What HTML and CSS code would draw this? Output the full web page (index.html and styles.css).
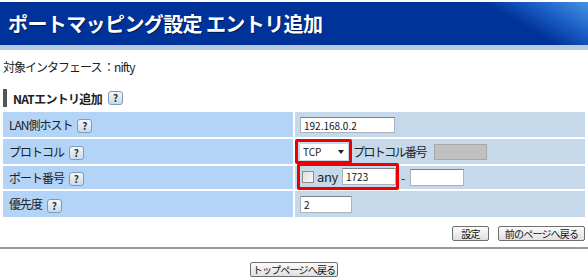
FILE: index.html
```html
<!DOCTYPE html>
<html lang="ja">
<head>
  <meta charset="UTF-8">
  <title>ポートマッピング設定 エントリ追加</title>
  <link rel="stylesheet" href="styles.css">
</head>
<body>

  <!-- Page title bar -->
  <div class="titleBar">
    <h1>ポートマッピング設定 エントリ追加</h1>
  </div>

  <div class="content">
    <p class="target">対象インタフェース ：nifty</p>

    <!-- NAT entry section -->
    <div class="sectionHead">
      <span class="sectionName">NATエントリ追加</span>
      <span class="help">?</span>
    </div>

    <table class="formTable">
      <tr class="row1">
        <th>LAN側ホスト <span class="help">?</span></th>
        <td><input type="text" class="hostInput" value="192.168.0.2"></td>
      </tr>
      <tr class="row2">
        <th>プロトコル <span class="help">?</span></th>
        <td>
          <div class="inline">
            <span class="redBox protoBox">
              <span class="select">TCP <span class="arrow"></span></span>
            </span>
            <span class="protoLabel">プロトコル番号</span>
            <input type="text" class="protoNum" disabled>
          </div>
        </td>
      </tr>
      <tr class="row3">
        <th>ポート番号 <span class="help">?</span></th>
        <td>
          <div class="inline">
            <span class="redBox portBox">
              <span class="check"></span>
              <span class="anyLabel">any</span>
              <input type="text" class="portInput" value="1723">
            </span>
            <span class="dash">-</span>
            <input type="text" class="portInput portEnd">
          </div>
        </td>
      </tr>
      <tr class="row4">
        <th>優先度 <span class="help">?</span></th>
        <td><input type="text" class="prioInput" value="2"></td>
      </tr>
    </table>

    <div class="actions">
      <button class="btn btnSet">設定</button>
      <button class="btn btnBack">前のページへ戻る</button>
    </div>
  </div>

  <hr class="rule">

  <div class="footer">
    <button class="btn btnTop">トップページへ戻る</button>
  </div>

</body>
</html>
```

FILE: styles.css
```css
/* Base */
body {
  margin: 0;
  font-family: "Noto Sans CJK JP", "Noto Sans", sans-serif;
  font-size: 12px;
  color: #222;
  background: #fff;
  overflow: hidden;
}

/* Title bar */
.titleBar {
  margin-top: 2px;
  height: 43px;
  background: linear-gradient(30deg, #003399 84%, #1a5cc4 91%, #4494e4 100%);
  border-bottom: 5px solid #b6cbde;
  display: flex;
  align-items: center;
}

h1 {
  margin: 0 0 0 8px;
  font-size: 20px;
  font-weight: 700;
  color: #fff;
  letter-spacing: -0.6px;
  text-shadow: 1px 1px 0 #001a55;
}

.content {
  padding: 0 1px;
}

.target {
  margin: 10px 0 0 2px;
  line-height: 14px;
  font-size: 12px;
  letter-spacing: -1px;
}

/* Section heading with side bar */
.sectionHead {
  margin: 15px 0 0 2px;
  height: 18px;
  border-left: 4px solid #555;
  padding-left: 6px;
  display: flex;
  align-items: center;
  gap: 6px;
}

.sectionName {
  font-weight: 700;
  letter-spacing: -0.7px;
}

/* Help "?" badge */
.help {
  display: inline-flex;
  align-items: center;
  justify-content: center;
  width: 13px;
  height: 12px;
  border: 1px solid #7f9bbb;
  border-radius: 3px;
  background: linear-gradient(#f5f8fc, #c9d9ea);
  font-size: 10px;
  font-weight: 700;
  color: #333;
  vertical-align: middle;
  line-height: 1;
  letter-spacing: 0;
}

/* Form table */
.formTable {
  width: 586px;
  margin-top: 3px;
  border-spacing: 2px;
}

.formTable th {
  width: 284px;
  padding: 0 0 0 6px;
  text-align: left;
  font-weight: 400;
  background: #b3d3f7;
  letter-spacing: -1px;
}

.formTable th .help {
  margin-left: 3px;
}

.formTable td {
  padding: 0 0 0 5px;
  background: #c6d9ea;
}

.row1 { height: 25px; }
.row2 { height: 25px; }
.row3 { height: 23px; }
.row4 { height: 26px; }

input[type="text"] {
  box-sizing: border-box;
  height: 16px;
  margin: 0;
  padding: 0 3px;
  border: 1px solid #aab4be;
  border-top-color: #7a838c;
  background: #fff;
  font-family: "Noto Sans CJK JP", sans-serif;
  font-size: 10px;
  color: #111;
  outline: none;
}

.hostInput {
  width: 95px;
}

.inline {
  display: flex;
  align-items: center;
}

/* Red highlight boxes */
.redBox {
  border: 3px solid #ee0000;
  border-radius: 2px;
  display: inline-flex;
  align-items: center;
  box-sizing: border-box;
}

.protoBox {
  margin: -1px 0 -1px -5px;
  width: 57px;
  height: 25px;
  padding-left: 2px;
}

.select {
  box-sizing: border-box;
  width: 48px;
  height: 16px;
  background: #fff;
  display: flex;
  align-items: center;
  justify-content: space-between;
  padding: 0 4px 0 3px;
  font-size: 10px;
}

.arrow {
  width: 0;
  height: 0;
  border-left: 3px solid transparent;
  border-right: 3px solid transparent;
  border-top: 4px solid #222;
}

.protoLabel {
  margin-left: 1px;
  letter-spacing: -1.6px;
}

.protoNum {
  width: 53px;
  margin-left: 8px !important;
  background: #c0c0c0 !important;
  border-color: #a8a8a8 !important;
}

.portBox {
  margin: -3px 0 -1px -3px;
  width: 102px;
  height: 27px;
  padding-left: 2px;
}

.check {
  box-sizing: border-box;
  width: 12px;
  height: 12px;
  border: 1px solid #8d8d8d;
  background: linear-gradient(135deg, #dcdcdc, #fbfbfb);
}

.anyLabel {
  margin: 0 4px 0 3px;
  font-size: 13px;
  letter-spacing: -0.3px;
}

.portInput {
  width: 54px;
  height: 17px !important;
}

.dash {
  margin: 0 5px 0 2px;
}

.prioInput {
  width: 52px;
  height: 17px !important;
}

/* Buttons */
.btn {
  box-sizing: border-box;
  height: 15px;
  padding: 0;
  border: 1px solid #6f6f6f;
  border-radius: 2px;
  background: linear-gradient(#fbfbfb, #e0e0e0);
  font-family: "Noto Sans CJK JP", sans-serif;
  font-size: 10px;
  line-height: 12px;
  color: #111;
  letter-spacing: -0.8px;
  white-space: nowrap;
  text-align: center;
}

.actions {
  margin-top: 7px;
  padding-right: 2px;
  display: flex;
  justify-content: flex-end;
  gap: 9px;
}

.btnSet {
  width: 37px;
}

.btnBack {
  width: 87px;
}

.rule {
  margin: 6px 0 0;
  height: 2px;
  border: none;
  background: #9a9a9a;
}

.footer {
  margin-top: 13px;
  display: flex;
  justify-content: center;
}

.btnTop {
  width: 88px;
}
```
